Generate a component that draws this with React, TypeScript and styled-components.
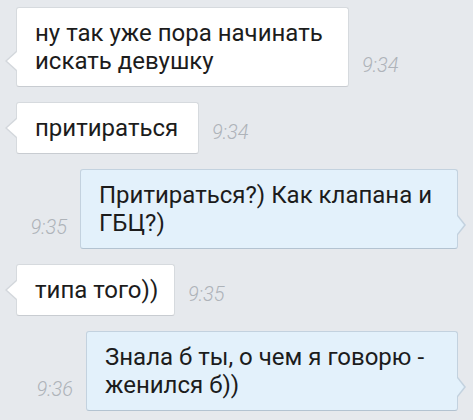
import React from "react";
import styled, { createGlobalStyle, css } from "styled-components";

const Global = createGlobalStyle`
  html, body { margin: 0; padding: 0; background: #e6e9ed; }
  body { font-family: Roboto, "Noto Sans", sans-serif; }
`;

const Chat = styled.div`
  display: flex;
  flex-direction: column;
  gap: 15px;
  padding: 7px 15px 0 16px;
  width: 473px;
  height: 420px;
  box-sizing: border-box;
  overflow: hidden;
`;

const Row = styled.div<{ $out?: boolean }>`
  display: flex;
  align-items: flex-end;
  gap: 13px;
  justify-content: ${(p) => (p.$out ? "flex-end" : "flex-start")};
`;

const Bubble = styled.div<{ $out?: boolean; $w: number }>`
  position: relative;
  box-sizing: border-box;
  width: ${(p) => p.$w}px;
  padding: 11px 0 11px 18px;
  font-size: 24px;
  line-height: 28px;
  color: #1c1c1c;
  white-space: pre;
  border-radius: 3px;
  background: ${(p) => (p.$out ? "#e3f1fb" : "#ffffff")};
  border: 1px solid ${(p) => (p.$out ? "#c3d2df" : "#d6dade")};
  border-bottom-color: ${(p) => (p.$out ? "#b3c3d1" : "#c8ccd1")};

  &::before,
  &::after {
    content: "";
    position: absolute;
    width: 0;
    height: 0;
    border-style: solid;
    border-color: transparent;
  }

  ${(p) =>
    p.$out
      ? css`
          &::before {
            right: -9px;
            bottom: 13px;
            border-width: 10px 0 10px 8px;
            border-left-color: #c3d2df;
          }
          &::after {
            right: -7px;
            bottom: 14px;
            border-width: 9px 0 9px 7px;
            border-left-color: #e3f1fb;
          }
        `
      : css`
          &::before {
            left: -12px;
            bottom: 15px;
            border-width: 10px 11px 10px 0;
            border-right-color: #d3d7dc;
          }
          &::after {
            left: -10px;
            bottom: 16px;
            border-width: 9px 10px 9px 0;
            border-right-color: #ffffff;
          }
        `}
`;

const Time = styled.span`
  font-family: Roboto, "Noto Sans", sans-serif;
  font-style: italic;
  font-weight: 300;
  font-size: 20px;
  line-height: 20px;
  color: #aeb3b9;
  padding-bottom: 12px;
`;

type Msg = { text: string; time: string; out?: boolean; w: number };

const messages: Msg[] = [
  { text: "ну так уже пора начинать\nискать девушку", time: "9:34", w: 333 },
  { text: "притираться", time: "9:34", w: 183 },
  { text: "Притираться?) Как клапана и\nГБЦ?)", time: "9:35", out: true, w: 378 },
  { text: "типа того))", time: "9:35", w: 159 },
  { text: "Знала б ты, о чем я говорю -\nженился б))", time: "9:36", out: true, w: 372 },
];

export default function App() {
  return (
    <>
      <Global />
      <Chat>
        {messages.map((m, i) => (
          <Row key={i} $out={m.out}>
            {m.out && <Time>{m.time}</Time>}
            <Bubble $out={m.out} $w={m.w}>
              {m.text}
            </Bubble>
            {!m.out && <Time>{m.time}</Time>}
          </Row>
        ))}
      </Chat>
    </>
  );
}
